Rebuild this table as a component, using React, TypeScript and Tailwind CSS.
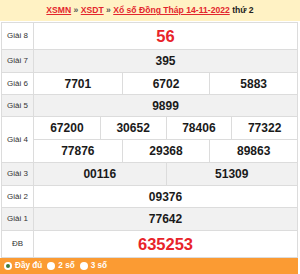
type Row = {
  label: string;
  lines: string[][];
  height: string;
  shade: boolean;
  big?: boolean;
};

const rows: Row[] = [
  { label: "Giải 8", lines: [["56"]], height: "h-[27px]", shade: false, big: true },
  { label: "Giải 7", lines: [["395"]], height: "h-[23px]", shade: true },
  { label: "Giải 6", lines: [["7701", "6702", "5883"]], height: "h-[22px]", shade: false },
  { label: "Giải 5", lines: [["9899"]], height: "h-[22px]", shade: true },
  {
    label: "Giải 4",
    lines: [
      ["67200", "30652", "78406", "77322"],
      ["77876", "29368", "89863"],
    ],
    height: "h-[46px]",
    shade: false,
  },
  { label: "Giải 3", lines: [["00116", "51309"]], height: "h-[23px]", shade: true },
  { label: "Giải 2", lines: [["09376"]], height: "h-[22px]", shade: false },
  { label: "Giải 1", lines: [["77642"]], height: "h-[23px]", shade: true },
  { label: "ĐB", lines: [["635253"]], height: "h-[27px]", shade: false, big: true },
];

const gridCols: Record<number, string> = {
  1: "grid-cols-1",
  2: "grid-cols-2",
  3: "grid-cols-3",
  4: "grid-cols-4",
};

const App = () => {
  return (
    <div className="h-[274px] w-[300px] overflow-hidden bg-white font-['Liberation_Sans',Arial,sans-serif]">
      <div className="flex h-[21px] items-center justify-center bg-[#fff2c4] text-[8.6px] font-bold">
        <a className="text-[#e3262d] underline">XSMN</a>
        <span className="mx-[2.4px] text-[#555]">»</span>
        <a className="text-[#e3262d] underline">XSDT</a>
        <span className="mx-[2.4px] text-[#555]">»</span>
        <a className="text-[#e3262d] underline">Xổ số Đồng Tháp 14-11-2022</a>
        <span className="ml-[2.4px] text-[#222]">thứ 2</span>
      </div>
      <div className="ml-px mt-px w-[297px] border-x border-t border-[#dcdcdc]">
        {rows.map((row) => (
          <div
            className={`flex border-b border-[#dcdcdc] ${row.height} ${row.shade ? "bg-[#f1f1f1]" : "bg-white"}`}
            key={row.label}
          >
            <div className="flex w-[32px] shrink-0 items-center justify-center border-r border-[#dcdcdc] text-[8px] text-[#333]">
              {row.label}
            </div>
            <div className="flex flex-1 flex-col">
              {row.lines.map((line, i) => (
                <div
                  className={`grid flex-1 ${gridCols[line.length]} ${i > 0 ? "border-t border-[#dcdcdc]" : ""}`}
                  key={i}
                >
                  {line.map((num, j) => (
                    <div
                      className={`flex items-center justify-center font-bold ${j > 0 ? "border-l border-[#dcdcdc]" : ""} ${
                        row.big ? "text-[16.5px] text-[#e8232a]" : "text-[12px] text-[#1a1a1a]"
                      }`}
                      key={j}
                    >
                      {num}
                    </div>
                  ))}
                </div>
              ))}
            </div>
          </div>
        ))}
      </div>
      <div className="flex h-[16px] w-[298px] items-center bg-[#fb9b33] pl-[4px] text-[8.2px] font-bold text-white">
        <span className="flex h-[8px] w-[8px] items-center justify-center rounded-full bg-white">
          <span className="h-[4px] w-[4px] rounded-full bg-[#3d7a3a]" />
        </span>
        <span className="ml-[3px]">Đầy đủ</span>
        <span className="ml-[5px] h-[8px] w-[8px] rounded-full bg-white" />
        <span className="ml-[3px]">2 số</span>
        <span className="ml-[5px] h-[8px] w-[8px] rounded-full bg-white" />
        <span className="ml-[3px]">3 số</span>
      </div>
    </div>
  );
};

export default App;
